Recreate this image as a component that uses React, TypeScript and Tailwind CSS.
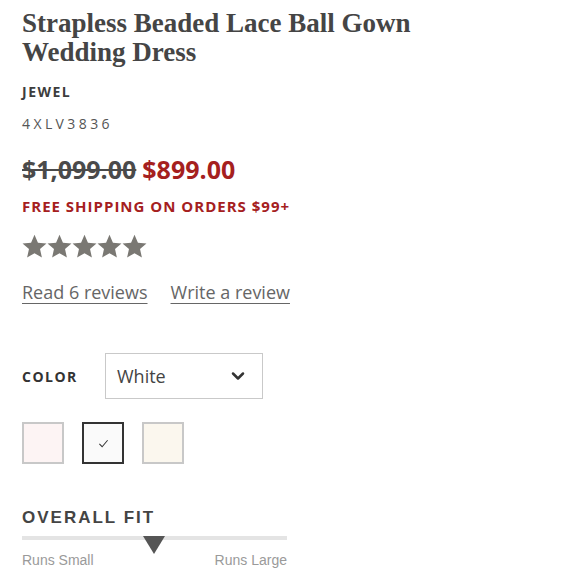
import { ChevronDown } from "lucide-react";

const serif = "font-['Liberation_Serif',serif]";
const sans = "font-['Open_Sans',sans-serif]";
const arial = "font-['Liberation_Sans',Arial,sans-serif]";

function Star() {
  return (
    <svg viewBox="0 0 24 24" className="h-[25px] w-[25px]" fill="#7a7873">
      <path d="M12 .8l3.3 7.5 8.2.8-6.2 5.4 1.8 8.1L12 18.4l-7.1 4.2 1.8-8.1L.5 9.1l8.2-.8z" />
    </svg>
  );
}

const swatches = [
  { color: "bg-[#fdf4f4]", selected: false },
  { color: "bg-[#fafafa]", selected: true },
  { color: "bg-[#fbf7ee]", selected: false },
];

export default function App() {
  return (
    <div className="min-h-[580px] w-[580px] bg-white pl-[22px] pt-[9px] text-[#444]">
      <h1 className={`${serif} text-[27px] font-bold leading-[29px] text-[#454545]`}>
        Strapless Beaded Lace Ball Gown
        <br />
        Wedding Dress
      </h1>

      <p className={`${sans} mt-[15px] text-[14px] font-bold leading-[20px] tracking-[1.5px] text-[#3d3d3d]`}>
        JEWEL
      </p>
      <p className={`${sans} mt-[12px] text-[14px] leading-[20px] tracking-[3.4px] text-[#555]`}>
        4XLV3836
      </p>

      <div className={`${sans} mt-[20px] flex items-baseline gap-[6px] text-[25px] font-bold leading-[30px]`}>
        <span className="text-[#4a4a4a] line-through decoration-[2px]">$1,099.00</span>
        <span className="text-[#a5201e]">$899.00</span>
      </div>

      <p className={`${sans} mt-[12px] text-[15px] font-bold leading-[20px] tracking-[1px] text-[#a5201e]`}>
        FREE SHIPPING ON ORDERS $99+
      </p>

      <div className="mt-[18px] flex">
        <Star />
        <Star />
        <Star />
        <Star />
        <Star />
      </div>

      <div className={`${sans} mt-[21px] flex gap-[23px] text-[18px] leading-[24px] text-[#666]`}>
        <a className="underline decoration-[1px] underline-offset-[4px]">Read 6 reviews</a>
        <a className="underline decoration-[1px] underline-offset-[4px]">Write a review</a>
      </div>

      <div className="mt-[49px] flex items-center">
        <span className={`${sans} w-[83px] text-[14px] font-bold tracking-[1.5px] text-[#333]`}>
          COLOR
        </span>
        <div className="flex h-[46px] w-[158px] items-center justify-between border border-[#c9c9c9] pl-[11px] pr-[14px]">
          <span className={`${sans} text-[18px] text-[#444]`}>White</span>
          <ChevronDown className="h-[20px] w-[20px] text-[#333]" strokeWidth={3} />
        </div>
      </div>

      <div className="mt-[23px] flex gap-[18px]">
        {swatches.map((s, i) => (
          <div
            key={i}
            className={`flex h-[42px] w-[42px] items-center justify-center border-2 ${s.color} ${
              s.selected ? "border-[#333]" : "border-[#c8c8c8]"
            }`}
          >
            {s.selected && (
              <svg viewBox="0 0 12 12" className="h-[11px] w-[11px]" fill="none" stroke="#333" strokeWidth={1.1}>
                <path d="M1.5 6.5l3 3 6-7" />
              </svg>
            )}
          </div>
        ))}
      </div>

      <div className="mt-[44px] w-[265px]">
        <p className={`${arial} text-[17px] font-bold leading-[20px] tracking-[2px] text-[#444]`}>
          OVERALL FIT
        </p>
        <div className="relative mt-[8px] h-[4px] bg-[#e4e4e4]">
          <svg
            viewBox="0 0 22 18"
            className="absolute left-[121px] top-0 h-[18px] w-[22px]"
            fill="#555"
          >
            <path d="M0 0h22L11 18z" />
          </svg>
        </div>
        <div className={`${arial} mt-[12px] flex justify-between text-[14px] leading-[16px] text-[#9a9a9a]`}>
          <span>Runs Small</span>
          <span>Runs Large</span>
        </div>
      </div>
    </div>
  );
}
